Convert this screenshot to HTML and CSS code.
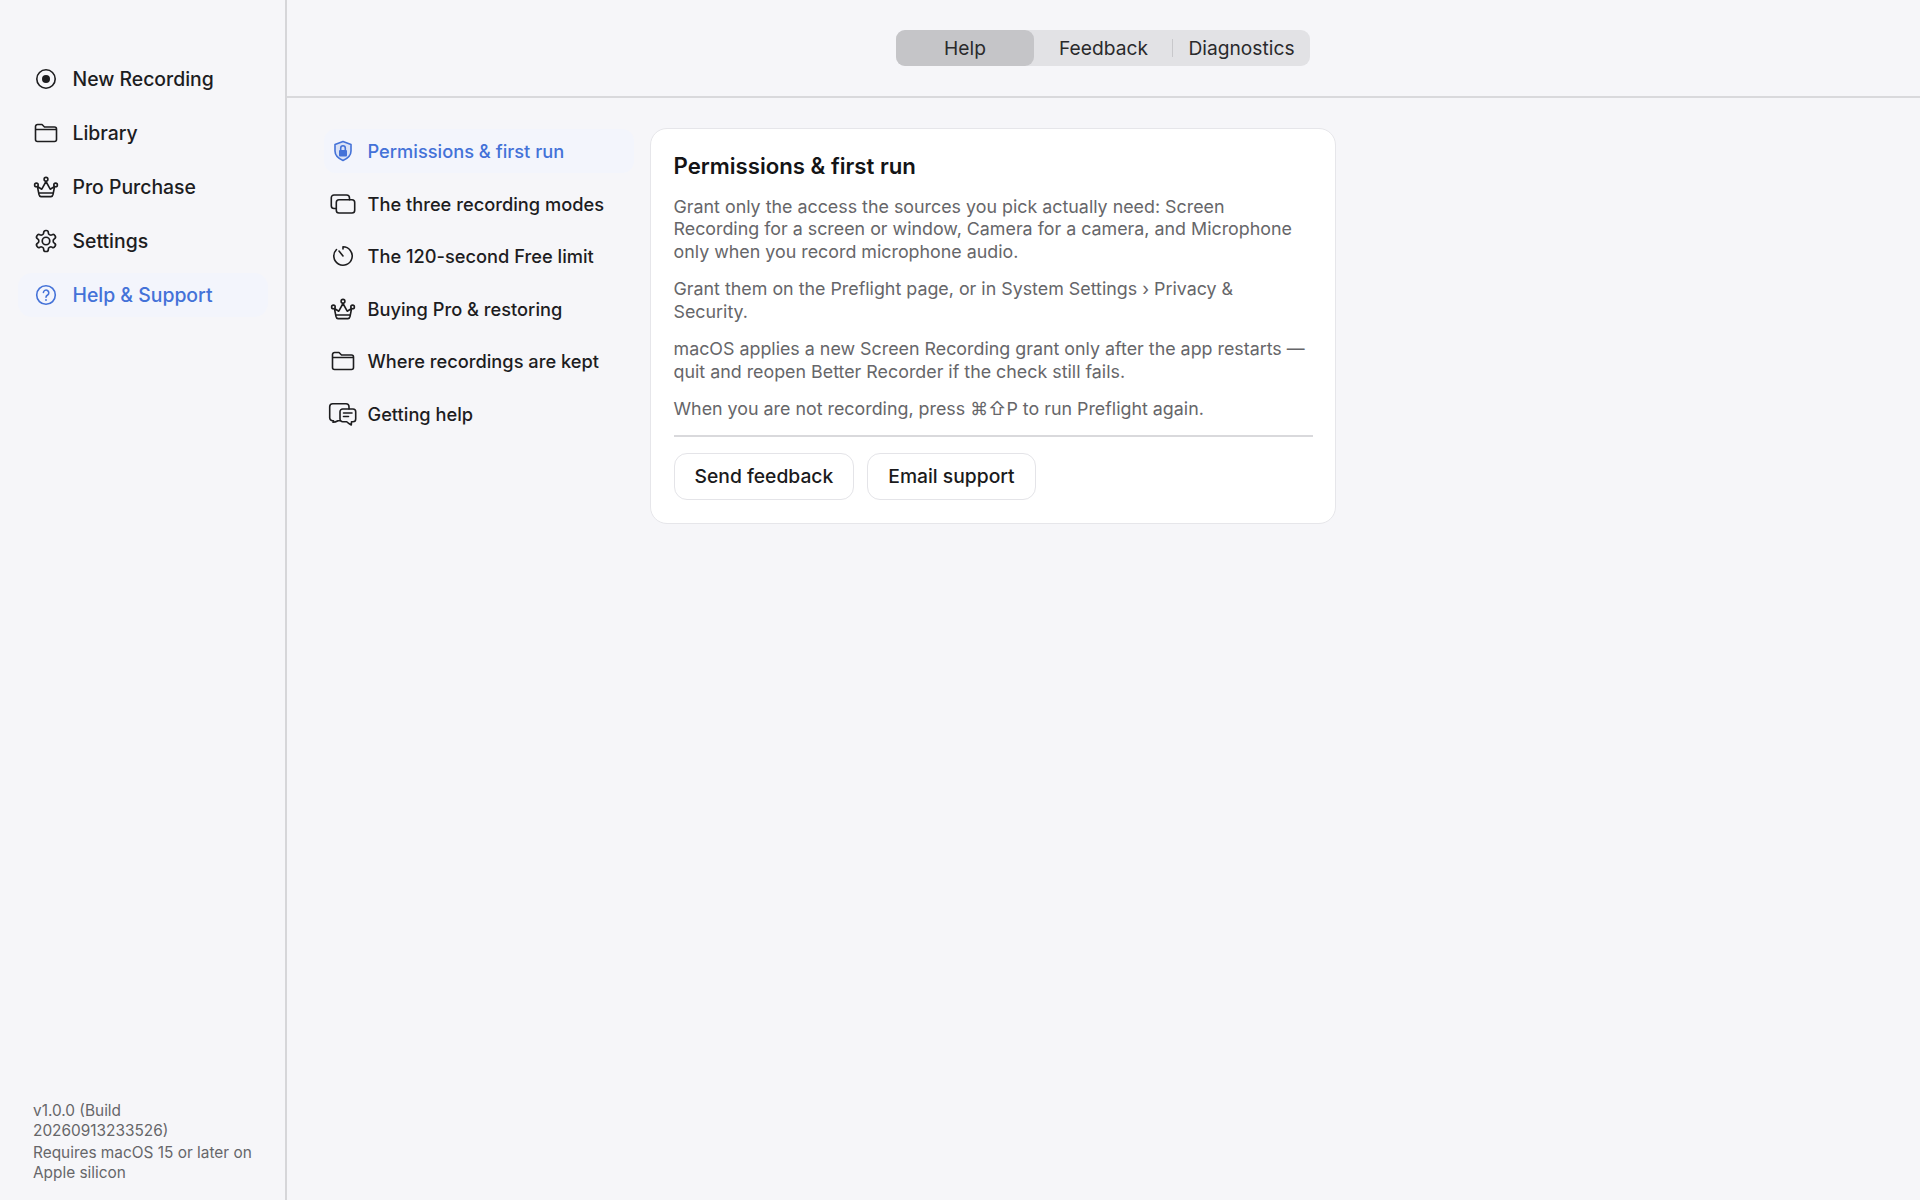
FILE: index.html
```html
<!DOCTYPE html>
<html lang="en">
<head>
<meta charset="utf-8">
<title>Better Recorder — Help &amp; Support</title>
<link rel="stylesheet" href="styles.css">
</head>
<body>
<div class="app">
  <aside class="sidebar">
    <nav class="nav">
      <a class="nav-item">
        <svg class="icon" viewBox="0 0 26 26"><circle cx="13" cy="13" r="9.2"/><circle class="solid" cx="13" cy="13" r="4"/></svg>
        <span>New Recording</span>
      </a>
      <a class="nav-item">
        <svg class="icon" viewBox="0 0 26 26"><path d="M2.5 9V6.5A2 2 0 0 1 4.5 4.5H9L11.5 7H21.5A2 2 0 0 1 23.5 9V19.5A2 2 0 0 1 21.5 21.5H4.5A2 2 0 0 1 2.5 19.5ZM2.5 9.5H23.5"/></svg>
        <span>Library</span>
      </a>
      <a class="nav-item">
        <svg class="icon" viewBox="0 0 26 26"><path d="M4.4 12.5L8.8 15.2L13 7.5L17.2 15.2L21.6 12.5L20 20.5Q19.5 22.6 18 22.6H8Q6.5 22.6 6 20.5ZM5.8 19H20.2"/><circle cx="13" cy="5.3" r="1.9"/><circle cx="3.4" cy="10.9" r="1.8"/><circle cx="22.6" cy="10.9" r="1.8"/></svg>
        <span>Pro Purchase</span>
      </a>
      <a class="nav-item">
        <svg class="icon" viewBox="-0.4 -0.4 24.8 24.8"><path d="M12.22 2h-.44a2 2 0 0 0-2 2v.18a2 2 0 0 1-1 1.73l-.43.25a2 2 0 0 1-2 0l-.15-.08a2 2 0 0 0-2.73.73l-.22.38a2 2 0 0 0 .73 2.73l.15.1a2 2 0 0 1 1 1.72v.51a2 2 0 0 1-1 1.74l-.15.09a2 2 0 0 0-.73 2.73l.22.38a2 2 0 0 0 2.73.73l.15-.08a2 2 0 0 1 2 0l.43.25a2 2 0 0 1 1 1.73V20a2 2 0 0 0 2 2h.44a2 2 0 0 0 2-2v-.18a2 2 0 0 1 1-1.73l.43-.25a2 2 0 0 1 2 0l.15.08a2 2 0 0 0 2.73-.73l.22-.39a2 2 0 0 0-.73-2.73l-.15-.08a2 2 0 0 1-1-1.74v-.5a2 2 0 0 1 1-1.74l.15-.09a2 2 0 0 0 .73-2.73l-.22-.38a2 2 0 0 0-2.73-.73l-.15.08a2 2 0 0 1-2 0l-.43-.25a2 2 0 0 1-1-1.73V4a2 2 0 0 0-2-2z"/><circle cx="12" cy="12" r="3.6"/></svg>
        <span>Settings</span>
      </a>
      <a class="nav-item active">
        <svg class="icon" viewBox="0 0 26 26"><circle cx="13" cy="13" r="9.3"/><path d="M10.4 10.5A2.7 2.7 0 1 1 14.6 13C13.6 13.6 13 14.1 13 15.2"/><circle class="solid" cx="13" cy="18" r="0.9"/></svg>
        <span>Help &amp; Support</span>
      </a>
    </nav>
    <footer class="about">
      <p>v1.0.0 (Build 20260913233526)</p>
      <p>Requires macOS 15 or later on Apple silicon</p>
    </footer>
  </aside>

  <main class="main">
    <header class="topbar">
      <div class="segments">
        <button class="segment selected">Help</button>
        <button class="segment with-divider">Feedback</button>
        <button class="segment">Diagnostics</button>
      </div>
    </header>

    <div class="content">
      <ul class="topics">
        <li class="topic active">
          <svg class="icon" viewBox="0 0 26 26"><path class="tint" d="M13 3.5L21 6.5V13C21 17.5 17.5 20.5 13 22.5C8.5 20.5 5 17.5 5 13V6.5Z"/><rect class="solid" x="9" y="12" width="8" height="6.5" rx="1"/><path d="M10.7 12V10A2.3 2.3 0 0 1 15.3 10V12"/></svg>
          <span>Permissions &amp; first run</span>
        </li>
        <li class="topic">
          <svg class="icon" viewBox="0 0 26 26"><path d="M6 17.5H4A2.7 2.7 0 0 1 1.3 15V6.7A2.7 2.7 0 0 1 4 4H16.5A3 3 0 0 1 19.5 7V8.7"/><rect x="6.3" y="8.7" width="18.4" height="13.3" rx="2.7"/></svg>
          <span>The three recording modes</span>
        </li>
        <li class="topic">
          <svg class="icon" viewBox="0 0 26 26"><path d="M13 3.8A9.2 9.2 0 1 1 6.5 6.5M13 13L9 8M13 3.8V6"/></svg>
          <span>The 120-second Free limit</span>
        </li>
        <li class="topic">
          <svg class="icon" viewBox="0 0 26 26"><path d="M4.4 12.5L8.8 15.2L13 7.5L17.2 15.2L21.6 12.5L20 20.5Q19.5 22.6 18 22.6H8Q6.5 22.6 6 20.5ZM5.8 19H20.2"/><circle cx="13" cy="5.3" r="1.9"/><circle cx="3.4" cy="10.9" r="1.8"/><circle cx="22.6" cy="10.9" r="1.8"/></svg>
          <span>Buying Pro &amp; restoring</span>
        </li>
        <li class="topic">
          <svg class="icon" viewBox="0 0 26 26"><path d="M2.5 9V6.5A2 2 0 0 1 4.5 4.5H9L11.5 7H21.5A2 2 0 0 1 23.5 9V19.5A2 2 0 0 1 21.5 21.5H4.5A2 2 0 0 1 2.5 19.5ZM2.5 9.5H23.5"/></svg>
          <span>Where recordings are kept</span>
        </li>
        <li class="topic">
          <svg class="icon wide" viewBox="0 0 30 26"><path d="M21 8V5.7A3 3 0 0 0 18 2.7H4.7A3 3 0 0 0 1.7 5.7V16.7A3 3 0 0 0 4.7 19.7H5.5C5.5 20 5.5 20.5 5 21.3C7 21.3 8.5 20.6 10 19.7H12"/><path d="M14.7 8H25A2.7 2.7 0 0 1 27.7 10.7V18A2.7 2.7 0 0 1 25 20.7H23.5L23.3 24C21.5 23 20 22 18.7 20.7H14.7A2.7 2.7 0 0 1 12 18V10.7A2.7 2.7 0 0 1 14.7 8ZM15.5 12H24M15.5 15.5H20.5"/></svg>
          <span>Getting help</span>
        </li>
      </ul>

      <article class="card">
        <h2>Permissions &amp; first run</h2>
        <p>Grant only the access the sources you pick actually need: Screen Recording for a screen or window, Camera for a camera, and Microphone only when you record microphone audio.</p>
        <p>Grant them on the Preflight page, or in System Settings › Privacy &amp; Security.</p>
        <p>macOS applies a new Screen Recording grant only after the app restarts — quit and reopen Better Recorder if the check still fails.</p>
        <p>When you are not recording, press ⌘⇧P to run Preflight again.</p>
        <div class="actions">
          <button class="btn">Send feedback</button>
          <button class="btn">Email support</button>
        </div>
      </article>
    </div>
  </main>
</div>
</body>
</html>
```
FILE: styles.css
```css
* { box-sizing: border-box; }
html, body { margin: 0; height: 100%; }
body {
  background: #f6f6f9;
  color: #1d1d1f;
  font-family: Inter, "Noto Sans CJK SC", "DejaVu Sans", sans-serif;
}
.app { display: flex; height: 1200px; }

.sidebar {
  width: 287px;
  flex: none;
  border-right: 2px solid #d6d6d9;
  display: flex;
  flex-direction: column;
  justify-content: space-between;
  padding: 57px 17px 17px 18px;
}
.nav { display: flex; flex-direction: column; gap: 10px; }
.nav-item {
  height: 44px;
  display: flex;
  align-items: center;
  gap: 13.5px;
  padding-left: 15px;
  border-radius: 14px;
  font-size: 19.4px;
  font-weight: 500;
}
.nav-item.active, .topic.active { background: #f3f5fc; color: #4472d8; }
.icon {
  width: 26px;
  height: 26px;
  flex: none;
  fill: none;
  stroke: currentColor;
  stroke-width: 1.6;
  stroke-linejoin: round;
  stroke-linecap: round;
}
.icon .solid { fill: currentColor; stroke: none; }
.icon .tint { fill: rgba(68, 114, 216, 0.14); }
.icon.wide { width: 30px; margin: 0 -2px; }

.about { width: 240px; padding-left: 15px; font-size: 15.4px; line-height: 20px; color: #666669; }
.about p { margin: 0; }
.about p + p { margin-top: 2px; }

.main { flex: 1; min-width: 0; display: flex; flex-direction: column; }
.topbar {
  height: 98px;
  flex: none;
  border-bottom: 2px solid #d9d9dc;
  padding-top: 30px;
  padding-left: 609px;
}
.segments {
  display: inline-flex;
  width: 414px;
  height: 36px;
  background: #e2e2e5;
  border-radius: 9px;
}
.segment {
  flex: 1;
  border: 0;
  background: none;
  font: 400 19.2px Inter, sans-serif;
  color: #2a2a2c;
  padding: 0;
  border-radius: 9px;
  position: relative;
}
.segment + .segment { padding-left: 1px; }
.segment.selected { flex: 0 0 138px; background: #c5c5c8; }
.segment.with-divider::after {
  content: "";
  position: absolute;
  right: -1px;
  top: 9px;
  height: 18px;
  width: 1px;
  background: #c8c8cb;
}

.content { display: flex; align-items: flex-start; padding: 31px 0 0 37px; gap: 16px; }
.topics { list-style: none; margin: 0; padding: 0; width: 310px; flex: none; }
.topic {
  height: 44px;
  margin-bottom: 8.6px;
  display: flex;
  align-items: center;
  gap: 11.5px;
  padding-left: 6px;
  border-radius: 12px;
  font-size: 18.25px;
  font-weight: 500;
}

.card {
  width: 686px;
  flex: none;
  margin-top: -1px;
  background: #fff;
  border: 1.5px solid #e6e6ea;
  border-radius: 17px;
  padding: 22.5px 22px 23px 22.5px;
}
.card h2 { margin: 0 0 16px; font-size: 22.2px; line-height: 28px; font-weight: 600; color: #141416; }
.card p { max-width: 634px; margin: 0 0 14.6px; font-size: 17.85px; line-height: 22.65px; color: #666669; }
.actions {
  border-top: 2px solid #d9d9dc;
  padding-top: 15.5px;
  display: flex;
  gap: 13px;
}
.btn {
  height: 47px;
  padding: 0 20px;
  background: #fff;
  border: 1.5px solid #e4e4e8;
  border-radius: 13px;
  font: 500 19.3px Inter, sans-serif;
  color: #1a1a1c;
}
```
